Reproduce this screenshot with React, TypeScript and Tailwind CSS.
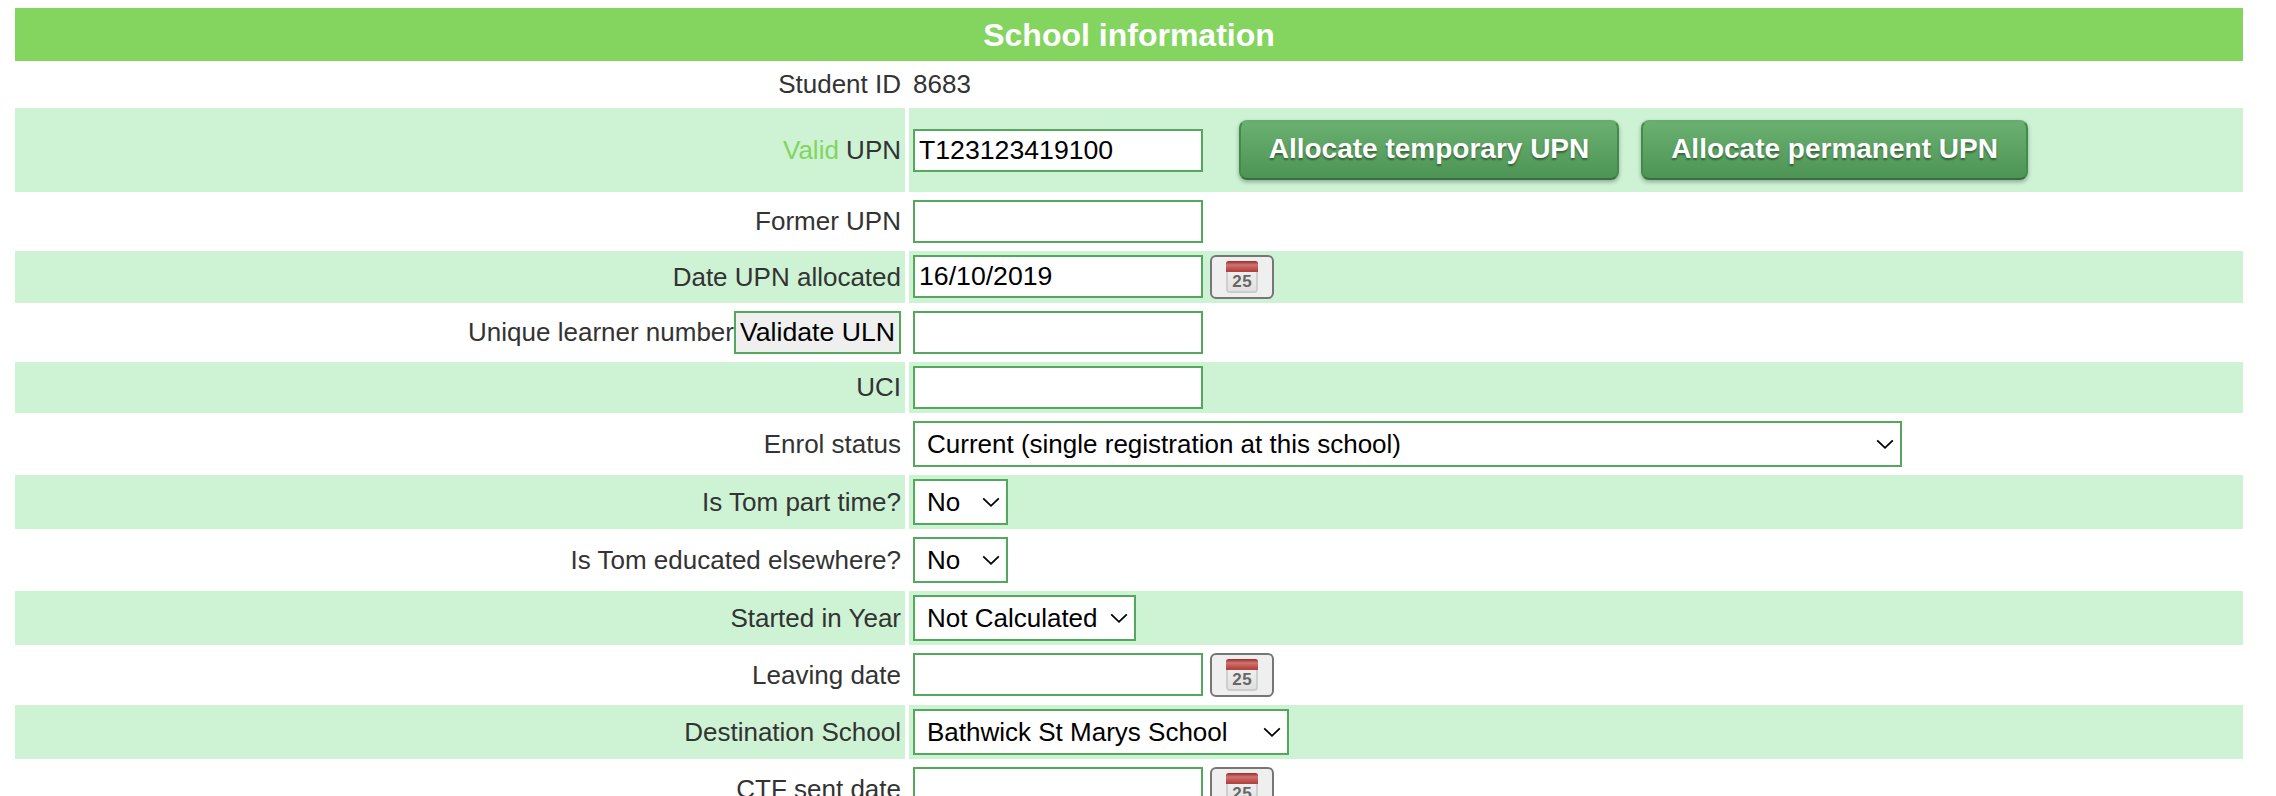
import React from 'react';

const inputClass =
  'block h-[43px] w-[290px] border-2 border-[#54a85c] bg-white px-1 pb-px text-[26.667px] leading-[36px] text-black outline-none';

function Row({
  label,
  height,
  shaded = false,
  children,
}: {
  label: React.ReactNode;
  height: string;
  shaded?: boolean;
  children: React.ReactNode;
}) {
  const bg = shaded ? 'bg-[#cdf2d4]' : '';

  return (
    <div className={`flex shrink-0 gap-1 ${height}`}>
      <div className={`flex w-[890px] shrink-0 items-center justify-end pr-1 ${bg}`}>{label}</div>
      <div className={`flex flex-1 items-center pl-1 ${bg}`}>{children}</div>
    </div>
  );
}

function TextInput({ value = '' }: { value?: string }) {
  return <input className={inputClass} defaultValue={value} />;
}

function DateInput({ value = '' }: { value?: string }) {
  return (
    <div className="flex items-start gap-[7px]">
      <TextInput value={value} />
      <CalendarButton />
    </div>
  );
}

function Select({ value, width }: { value: string; width: string }) {
  return (
    <div className={`relative h-[46px] ${width}`}>
      <select className="block h-full w-full appearance-none border-2 border-[#54a85c] bg-white pl-3 text-[26px] text-black outline-none">
        <option>{value}</option>
      </select>
      <svg
        className="pointer-events-none absolute top-[17px] right-[7px] h-3 w-5"
        viewBox="0 0 20 12"
        fill="none"
        stroke="black"
        strokeWidth="1.8"
      >
        <path d="M2.2 2.3 10 9.8 17.8 2.3" />
      </svg>
    </div>
  );
}

function CalendarButton() {
  return (
    <button className="flex h-11 w-16 items-center justify-center rounded-[6px] border-2 border-[#767676] bg-[#efefef]">
      <svg className="size-8" viewBox="0 0 32 32">
        <defs>
          <linearGradient id="calTop" x1="0" y1="0" x2="0" y2="1">
            <stop offset="0" stopColor="#9a2e2c" />
            <stop offset="0.2" stopColor="#b8504e" />
            <stop offset="0.35" stopColor="#cc7674" />
            <stop offset="0.9" stopColor="#b93f3c" />
            <stop offset="1" stopColor="#a84a48" />
          </linearGradient>
          <linearGradient id="calPage" x1="0" y1="0" x2="0" y2="1">
            <stop offset="0" stopColor="#f4f4f4" />
            <stop offset="1" stopColor="#dfdfdf" />
          </linearGradient>
        </defs>
        <rect x="1" y="4" width="30" height="27" rx="2.5" fill="url(#calPage)" stroke="#cccccc" strokeWidth="1.8" />
        <path d="M0 11V2.5A2.5 2.5 0 0 1 2.5 0h27A2.5 2.5 0 0 1 32 2.5V11z" fill="url(#calTop)" />
        <text x="16.3" y="26" textAnchor="middle" fontSize="17" fontWeight="bold" letterSpacing="0.6" fill="#666">
          25
        </text>
      </svg>
    </button>
  );
}

function GreenButton({ children, className }: { children: React.ReactNode; className: string }) {
  return (
    <button
      className={`h-[60px] rounded-[8px] border-2 border-[#458a4d] border-t-[#67ac6e] border-b-[#3a6e40] bg-linear-to-b from-[#6bb172] to-[#4c9453] bg-origin-border pb-0.5 text-[28px] leading-none font-bold whitespace-nowrap text-white shadow-[0_2px_4px_rgba(0,0,0,0.3)] [text-shadow:0_2px_2px_rgba(0,0,0,0.4)] ${className}`}
    >
      {children}
    </button>
  );
}

export default function App() {
  return (
    <div className="flex h-[796px] flex-col gap-1 overflow-hidden bg-white pt-2 pr-[33px] pl-[15px] font-['Liberation_Sans',Arial,sans-serif] text-[26px] text-[#333]">
      <h2 className="flex h-[53px] shrink-0 items-center justify-center bg-[#84d460] text-[32px] font-bold text-white">
        School information
      </h2>

      <Row label={<span className="pb-px">Student ID</span>} height="h-[39px]">
        <span className="pb-px">8683</span>
      </Row>
      <Row
        label={
          <span>
            <span className="text-[#84d460]">Valid</span> UPN
          </span>
        }
        height="h-[84px]"
        shaded
      >
        <div className="pt-px">
          <TextInput value="T123123419100" />
        </div>
        <GreenButton className="ml-9 w-[380px]">Allocate temporary UPN</GreenButton>
        <GreenButton className="ml-[22px] w-[387px]">Allocate permanent UPN</GreenButton>
      </Row>
      <Row label={<span className="pb-px">Former UPN</span>} height="h-[51px]">
        <TextInput />
      </Row>
      <Row label="Date UPN allocated" height="h-[52px]" shaded>
        <DateInput value="16/10/2019" />
      </Row>
      <Row
        label={
          <>
            <span className="pb-px">Unique learner number</span>
            <button className="h-[43px] w-[167px] border-2 border-[#54a85c] bg-[#efefef] pb-px text-[26.667px] leading-none whitespace-nowrap text-black">
              Validate ULN
            </button>
          </>
        }
        height="h-[51px]"
      >
        <TextInput />
      </Row>
      <Row label={<span className="pb-px">UCI</span>} height="h-[51px]" shaded>
        <TextInput />
      </Row>
      <Row label="Enrol status" height="h-[54px]">
        <Select value="Current (single registration at this school)" width="w-[989px]" />
      </Row>
      <Row label="Is Tom part time?" height="h-[54px]" shaded>
        <Select value="No" width="w-[95px]" />
      </Row>
      <Row label="Is Tom educated elsewhere?" height="h-[54px]">
        <Select value="No" width="w-[95px]" />
      </Row>
      <Row label="Started in Year" height="h-[54px]" shaded>
        <Select value="Not Calculated" width="w-[223px]" />
      </Row>
      <Row label="Leaving date" height="h-[52px]">
        <DateInput />
      </Row>
      <Row label="Destination School" height="h-[54px]" shaded>
        <Select value="Bathwick St Marys School" width="w-[376px]" />
      </Row>
      <Row label="CTF sent date" height="h-[52px]">
        <DateInput />
      </Row>
    </div>
  );
}
